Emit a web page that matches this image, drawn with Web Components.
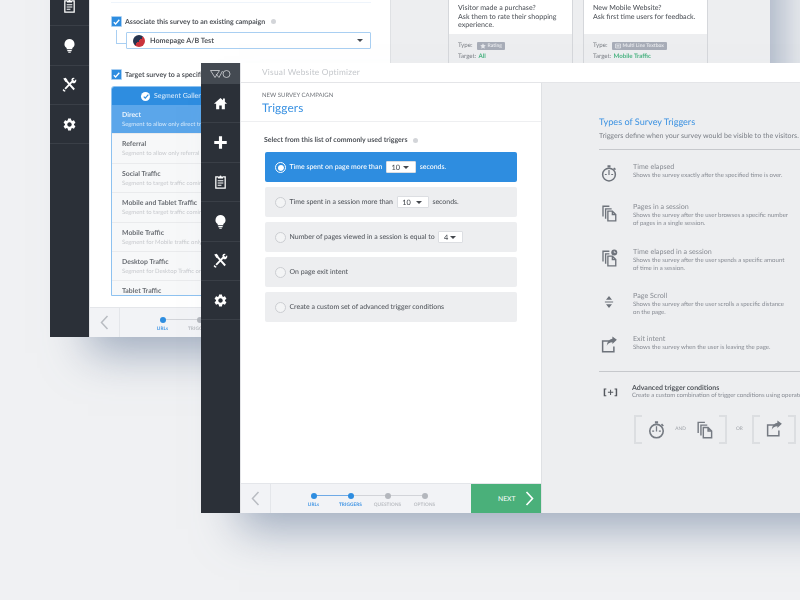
<!DOCTYPE html>
<html>
<head>
<meta charset="utf-8">
<title>Survey triggers</title>
<style>
    html, body{ margin: 0; height: 100%; overflow: hidden; }
    body{ background-color: #f0f1f3; font-family: 'Lato', 'Liberation Sans', sans-serif; color: #5e6268; text-rendering: geometricPrecision; }
    #back{ --win-x: 50px; --win-y: -113px; z-index: 1; }
    #front{ --win-x: 201px; --win-y: 63px; z-index: 2; }
</style>
</head>
<body>

<survey-window id="back" brand="Visual Website Optimizer">
    <campaign-form slot="main"></campaign-form>
    <step-footer slot="footer" active="1"></step-footer>
    <template-cards slot="aside"></template-cards>
</survey-window>

<survey-window id="front" brand="Visual Website Optimizer">
    <triggers-form slot="main"></triggers-form>
    <step-footer slot="footer" active="2" next></step-footer>
    <trigger-help slot="aside"></trigger-help>
</survey-window>

<script>
const ICONS = {
    home: '<path fill="currentColor" d="M12 3 1.5 12.5H5V21h5v-6h4v6h5v-8.500h3.500L19 9.300V4h-3v2.600z"/>',
    plus: '<path fill="currentColor" d="M9.500 2h5v7.500H22v5h-7.500V22h-5v-7.500H2v-5h7.500z"/>',
    clipboard: '<path fill="none" stroke="currentColor" stroke-width="2" d="M8 4.500H4.500V22.500H19.500V4.500H16"/><path fill="currentColor" d="M8 4h2.500a1.500 1.500 0 0 1 3 0H16v3H8zM7.500 10h9v1.700h-9zM7.500 13.500h9v1.700h-9zM7.500 17h6v1.700h-6z"/>',
    bulb: '<path fill="currentColor" d="M12 1.500a8 8 0 0 0-4.500 14.600V18h9v-1.900A8 8 0 0 0 12 1.500zM8.500 19.200h7V21h-7zM10 22h4v1.500h-4z"/>',
    tools: '<path fill="none" stroke="currentColor" stroke-width="3" d="M6 5 19.500 20M18 5.500 5 19"/><path fill="currentColor" d="M2 2.500 6 1 9 5 5.500 8zM15 3.500a4.500 4.500 0 0 1 5.500-2L17.500 4.500 19.500 6.500 22.500 3.500a4.500 4.500 0 0 1-6 6zM2 19l4 3.500L3.500 23.500 1 21z"/>',
    gear: '<path fill="currentColor" d="M19.140 12.940c.04-.3.06-.61.06-.94 0-.32-.02-.64-.07-.94l2.030-1.580c.18-.14.23-.41.12-.61l-1.920-3.320c-.12-.22-.37-.29-.59-.22l-2.390.96c-.5-.38-1.030-.7-1.620-.94l-.36-2.540c-.04-.24-.24-.41-.48-.41h-3.840c-.24 0-.43.17-.47.41l-.36 2.540c-.59.24-1.130.57-1.620.94l-2.390-.96c-.22-.08-.47 0-.59.22L2.740 8.870c-.12.21-.08.47.12.61l2.030 1.580c-.05.3-.09.63-.09.94s.02.64.07.94l-2.030 1.580c-.18.14-.23.41-.12.61l1.920 3.320c.12.22.37.29.59.22l2.390-.96c.5.38 1.030.7 1.620.94l.36 2.540c.05.24.24.41.48.41h3.840c.24 0 .44-.17.47-.41l.36-2.540c.59-.24 1.130-.56 1.620-.94l2.390.96c.22.08.47 0 .59-.22l1.920-3.320c.12-.22.07-.47-.12-.61l-2.010-1.580zM12 15.600c-1.980 0-3.600-1.620-3.600-3.600s1.620-3.600 3.600-3.600 3.600 1.620 3.600 3.600-1.620 3.600-3.600 3.600z"/>',
    watch: '<circle cx="12" cy="14" r="8.500" fill="none" stroke="currentColor" stroke-width="2"/><path fill="currentColor" d="M10 1.500h4v3h-4zM19 4.500l2.300 2.300-1.400 1.400-2.300-2.300zM11.200 8h1.600v6.500h-1.600zM6.500 13.300h2.500v1.400H6.500zM15 13.300h2.500v1.400H15z"/>',
    pages: '<path fill="none" stroke="currentColor" stroke-width="1.800" d="M10.500 9.500h6l4.500 4.500v8.500H10.500zM16.500 9.500V14H21"/><path fill="none" stroke="currentColor" stroke-width="1.800" d="M7.500 19.500V6.500h8M4 16.500V3h8.500"/>',
    pagesclock: '<path fill="none" stroke="currentColor" stroke-width="1.800" d="M10.500 9.500h6l4.500 4.500v8.500H10.500zM16.500 9.500V14H21"/><path fill="none" stroke="currentColor" stroke-width="1.800" d="M7.500 19.500V6.500h5M4 16.500V3h8.500"/><circle cx="19" cy="4.500" r="4" fill="currentColor"/><path fill="none" stroke="#edeef0" stroke-width="1" d="M19 2.500v2.300h2"/>',
    scroll: '<path fill="currentColor" d="M12 4 16 9H8zM12 20 8 15h8zM6.500 11.300h11v1.400h-11z"/>',
    exit: '<path fill="none" stroke="currentColor" stroke-width="2" d="M13 6.500H3.500V21h15v-7"/><path fill="currentColor" d="M22.500 5 16.500 .8v2.800C12 4.200 9.500 7.500 9 13c1.500-3.200 3.800-4.800 7.500-4.800v2.600z"/>'
};

function icon(name, size) {
    return `<svg xmlns="http://www.w3.org/2000/svg" viewBox="0 0 24 24" width="${size}" height="${size}" style="display:block">${ICONS[name]}</svg>`;
}

class NavRail extends HTMLElement {
    constructor() {
        super();
        this.shadow = this.attachShadow({ mode: 'open' });
    }

    connectedCallback() {
        let items = ['home', 'plus', 'clipboard', 'bulb', 'tools', 'gear'];
        this.shadow.innerHTML =
        `
        <style>
            :host{
                display: block;
                flex: 1;
                background-color: #2b3038;
                color: #fff;
            }
            div{
                align-items: center;
                border-bottom: 1px solid #3a3f47;
                box-sizing: border-box;
                display: flex;
                height: 39.400px;
                justify-content: center;
            }
        </style>
        ${items.map(name => `<div>${icon(name, 15)}</div>`).join('')}`;
    }
}
customElements.define('nav-rail', NavRail);

class SurveyWindow extends HTMLElement {
    constructor() {
        super();
        this.shadow = this.attachShadow({ mode: 'open' });
    }

    connectedCallback() {
        this.shadow.innerHTML =
        `
        <style>
            :host{
                background-color: #fff;
                box-shadow: 24px 30px 42px -14px rgba(105, 125, 155, 0.6);
                display: flex;
                filter: blur(0.3px);
                height: 450px;
                left: var(--win-x);
                position: absolute;
                top: var(--win-y);
                width: 720px;
            }
            .left{
                display: flex;
                flex-direction: column;
                flex: none;
                width: 39px;
            }
            .logo{
                align-items: center;
                background-color: #444a52;
                display: flex;
                flex: none;
                height: 21px;
                justify-content: center;
            }
            .right{
                border-left: 1px solid #e4e5e8;
                display: flex;
                flex: 1;
                flex-direction: column;
                min-width: 0;
            }
            .bar{
                border-bottom: 1px solid #e4e5e8;
                box-sizing: border-box;
                color: #c4c7cb;
                flex: none;
                font-size: 8.300px;
                height: 20px;
                letter-spacing: 0.25px;
                line-height: 19px;
                padding-left: 21px;
            }
            .body{
                display: flex;
                flex: 1;
                min-height: 0;
            }
            .pane{
                border-right: 1px solid #dfe1e4;
                box-sizing: border-box;
                display: flex;
                flex: none;
                flex-direction: column;
                width: 301px;
            }
            .content{
                flex: 1;
                min-height: 0;
                overflow: hidden;
            }
            .aside{
                background-color: #edeef0;
                flex: 1;
                min-width: 0;
                overflow: hidden;
            }
        </style>
        <div class="left">
            <div class="logo">
                <svg xmlns="http://www.w3.org/2000/svg" width="21" height="8" viewBox="0 0 21 8" fill="none" stroke="#d5d8dc" stroke-width="0.8">
                    <path d="M0.500 0.500H9.500L5 7.500ZM6 4 9 7.500 12.500 1"/><circle cx="16.500" cy="4" r="3.500"/>
                </svg>
            </div>
            <nav-rail></nav-rail>
        </div>
        <div class="right">
            <div class="bar">${this.getAttribute('brand')}</div>
            <div class="body">
                <div class="pane">
                    <div class="content"><slot name="main"></slot></div>
                    <slot name="footer"></slot>
                </div>
                <div class="aside"><slot name="aside"></slot></div>
            </div>
        </div>`;
    }
}
customElements.define('survey-window', SurveyWindow);

class StepFooter extends HTMLElement {
    constructor() {
        super();
        this.shadow = this.attachShadow({ mode: 'open' });
    }

    connectedCallback() {
        let active = Number(this.getAttribute('active'));
        let labels = ['URLs', 'TRIGGERS', 'QUESTIONS', 'OPTIONS'];
        let steps = labels.map((label, i) => {
            let on = i < active;
            let line = i < labels.length - 1 ? `<i class="${i < active - 1 ? 'on' : ''}"></i>` : '';
            return `<div class="step ${on ? 'on' : ''}"><b></b>${line}<span>${label}</span></div>`;
        }).join('');

        this.shadow.innerHTML =
        `
        <style>
            :host{
                background-color: #f2f3f6;
                border-top: 1px solid #e4e6ea;
                box-sizing: border-box;
                display: flex;
                flex: none;
                height: 30px;
            }
            .prev{
                align-items: center;
                border-right: 1px solid #e4e6ea;
                display: flex;
                flex: none;
                justify-content: center;
                width: 29px;
            }
            .steps{
                display: flex;
                flex: 1;
                padding-left: 24px;
            }
            .step{
                flex: none;
                height: 100%;
                position: relative;
                width: 37px;
            }
            .step b{
                background-color: #b4b7bd;
                border-radius: 50%;
                height: 6px;
                left: 15.500px;
                position: absolute;
                top: 8.500px;
                width: 6px;
                z-index: 1;
            }
            .step.on b{ background-color: #2e8de0; }
            .step i{
                background-color: #d2d4d9;
                height: 1px;
                left: 18px;
                position: absolute;
                top: 11px;
                width: 37px;
            }
            .step i.on{ background-color: #6faae6; }
            .step span{
                color: #b9bcc1;
                font-size: 4.700px;
                font-weight: 700;
                left: -12px;
                letter-spacing: 0.1px;
                line-height: 8px;
                position: absolute;
                right: -12px;
                text-align: center;
                top: 15.500px;
            }
            .step.on span{ color: #3f94e4; }
            .next{
                align-items: center;
                background-color: #4ab07a;
                color: #fff;
                display: flex;
                flex: none;
                font-size: 6.800px;
                gap: 9px;
                padding: 0 7px 0 27px;
                width: 36px;
            }
        </style>
        <div class="prev">
            <svg xmlns="http://www.w3.org/2000/svg" width="9" height="15" viewBox="0 0 9 15" fill="none" stroke="#b9bcc2" stroke-width="1.500"><path d="M7.500 1 1.500 7.500 7.500 14"/></svg>
        </div>
        <div class="steps">${steps}</div>
        ${this.hasAttribute('next') ? `<div class="next"><span>NEXT</span><svg xmlns="http://www.w3.org/2000/svg" width="9" height="15" viewBox="0 0 9 15" fill="none" stroke="#fff" stroke-width="1.600" style="flex:none"><path d="M1.500 1 7.500 7.500 1.500 14"/></svg></div>` : ''}`;
    }
}
customElements.define('step-footer', StepFooter);

class TriggerOption extends HTMLElement {
    constructor() {
        super();
        this.shadow = this.attachShadow({ mode: 'open' });
    }

    connectedCallback() {
        this.shadow.innerHTML =
        `
        <style>
            :host{
                align-items: center;
                background-color: #edeef0;
                border-radius: 2px;
                color: #55595f;
                display: flex;
                font-size: 6.950px;
                font-weight: 500;
                height: 30px;
                padding-left: 9.500px;
                white-space: pre;
            }
            :host([selected]){
                background-color: #2e8de0;
                color: #fff;
            }
            .radio{
                background-color: #f3f4f5;
                border: 1px solid #ccced2;
                border-radius: 50%;
                box-sizing: border-box;
                flex: none;
                height: 11px;
                margin-right: 4px;
                width: 11px;
            }
            :host([selected]) .radio{
                background-color: #fff;
                border: 1px solid #fff;
                box-shadow: inset 0 0 0 1px #2e8de0;
                padding: 1.500px;
                background-clip: content-box;
            }
        </style>
        <div class="radio"></div>
        <slot></slot>`;
    }
}
customElements.define('trigger-option', TriggerOption);

class MiniSelect extends HTMLElement {
    constructor() {
        super();
        this.shadow = this.attachShadow({ mode: 'open' });
    }

    connectedCallback() {
        this.shadow.innerHTML =
        `
        <style>
            :host{
                align-items: center;
                background-color: #fff;
                border: 1px solid #dcdee2;
                border-radius: 1px;
                box-sizing: border-box;
                color: #4c5056;
                display: inline-flex;
                font-size: 7.400px;
                height: 12px;
                justify-content: space-between;
                margin: 0 2px 0 2px;
                padding: 0 6px 0 4.500px;
                vertical-align: middle;
            }
            i{
                border-left: 3px solid transparent;
                border-right: 3px solid transparent;
                border-top: 3px solid #44484e;
            }
        </style>
        <slot></slot><i></i>`;
    }
}
customElements.define('mini-select', MiniSelect);

class TriggersForm extends HTMLElement {
    constructor() {
        super();
        this.shadow = this.attachShadow({ mode: 'open' });
    }

    connectedCallback() {
        this.shadow.innerHTML =
        `
        <style>
            :host{ display: block; }
            header{
                border-bottom: 1px solid #eeeff1;
                box-sizing: border-box;
                height: 39px;
                padding: 9px 0 0 21px;
            }
            small{
                color: #73777d;
                display: block;
                font-size: 6px;
                line-height: 8px;
            }
            h1{
                color: #3b92e2;
                font-size: 11.800px;
                font-weight: 400;
                letter-spacing: 0.1px;
                line-height: 15px;
                margin: 0;
            }
            p{
                align-items: center;
                color: #4f5359;
                display: flex;
                font-size: 7px;
                font-weight: 700;
                gap: 5px;
                height: 10px;
                margin: 13px 0 7px 23px;
            }
            p i{
                background-color: #d3d5d9;
                border-radius: 50%;
                height: 5px;
                width: 5px;
            }
            .list{
                display: flex;
                flex-direction: column;
                gap: 5px;
                padding: 0 24px;
            }
        </style>
        <header><small>NEW SURVEY CAMPAIGN</small><h1>Triggers</h1></header>
        <p>Select from this list of commonly used triggers <i></i></p>
        <div class="list">
            <trigger-option selected>Time spent on page more than <mini-select style="width:30px">10</mini-select> seconds.</trigger-option>
            <trigger-option>Time spent in a session more than <mini-select style="width:32px">10</mini-select> seconds.</trigger-option>
            <trigger-option>Number of pages viewed in a session is equal to <mini-select style="width:25px">4</mini-select></trigger-option>
            <trigger-option>On page exit intent</trigger-option>
            <trigger-option>Create a custom set of advanced trigger conditions</trigger-option>
        </div>`;
    }
}
customElements.define('triggers-form', TriggersForm);

class HelpItem extends HTMLElement {
    constructor() {
        super();
        this.shadow = this.attachShadow({ mode: 'open' });
    }

    connectedCallback() {
        let gap = this.getAttribute('gap') || 0;
        this.shadow.innerHTML =
        `
        <style>
            :host{
                display: flex;
                margin-top: ${gap}px;
                width: 191px;
            }
            .ico{
                color: #6e737b;
                display: flex;
                flex: none;
                justify-content: center;
                padding-top: 1px;
                width: 20px;
            }
            .txt{ margin-left: 14px; }
            b{
                color: #888c93;
                display: block;
                font-size: 7.150px;
                font-weight: 400;
                line-height: 8px;
                margin-bottom: 1px;
            }
            div.d{
                color: #878b93;
                font-size: 6.050px;
                line-height: 7.600px;
            }
        </style>
        <div class="ico">${icon(this.getAttribute('icon'), 18)}</div>
        <div class="txt"><b>${this.getAttribute('name')}</b><div class="d"><slot></slot></div></div>`;
    }
}
customElements.define('help-item', HelpItem);

class TriggerHelp extends HTMLElement {
    constructor() {
        super();
        this.shadow = this.attachShadow({ mode: 'open' });
    }

    connectedCallback() {
        this.shadow.innerHTML =
        `
        <style>
            :host{
                display: block;
                padding: 33px 0 0 57px;
                width: 330px;
            }
            h2{
                color: #3b92e2;
                font-size: 9.100px;
                font-weight: 400;
                line-height: 12px;
                margin: 0 0 3px;
            }
            p{
                color: #7d8188;
                font-size: 7.100px;
                line-height: 10px;
                margin: 0 0 8px;
            }
            hr{
                background-color: #c6c8cc;
                border: 0;
                height: 1px;
                margin: 0 0 13px;
            }
            .adv{
                display: flex;
                margin-top: 12px;
            }
            .adv em{
                color: #54585e;
                flex: none;
                font-family: 'DejaVu Sans', sans-serif;
                font-size: 8.500px;
                font-style: normal;
                font-weight: 700;
                line-height: 14px;
                padding: 2px 0 0 4px;
                width: 29px;
            }
            .adv b{
                color: #54585e;
                display: block;
                font-size: 7px;
                font-weight: 700;
                line-height: 8px;
            }
            .adv span{
                color: #878b93;
                display: block;
                font-size: 6.050px;
                line-height: 8px;
                white-space: nowrap;
            }
            .combo{
                align-items: center;
                color: #757a82;
                display: flex;
                margin: 15px 0 0 35px;
            }
            .group{
                align-items: center;
                border-left: 2.500px solid #dcdee1;
                border-right: 2.500px solid #dcdee1;
                box-sizing: border-box;
                display: flex;
                height: 29px;
                justify-content: center;
                position: relative;
            }
            .group::before, .group::after{
                border-bottom: 2px solid #dcdee1;
                border-top: 2px solid #dcdee1;
                bottom: 0;
                box-sizing: border-box;
                content: '';
                position: absolute;
                top: 0;
                width: 6px;
            }
            .group::before{ left: 0; }
            .group::after{ right: 0; }
            .combo small{
                color: #9da1a7;
                font-size: 4.800px;
                margin: 0 9px;
            }
        </style>
        <h2>Types of Survey Triggers</h2>
        <p>Triggers define when your survey would be visible to the visitors.</p>
        <hr>
        <help-item icon="watch" name="Time elapsed">Shows the survey exactly after the specified time is over.</help-item>
        <help-item icon="pages" name="Pages in a session" gap="21">Shows the survey after the user browses a specific number of pages in a single session.</help-item>
        <help-item icon="pagesclock" name="Time elapsed in a session" gap="21">Shows the survey after the user spends a specific amount of time in a session.</help-item>
        <help-item icon="scroll" name="Page Scroll" gap="20">Shows the survey after the user scrolls a specific distance on the page.</help-item>
        <help-item icon="exit" name="Exit intent" gap="18">Shows the survey when the user is leaving the page.</help-item>
        <hr style="margin:17px 0 0">
        <div class="adv">
            <em>[+]</em>
            <div><b>Advanced trigger conditions</b><span>Create a custom combination of trigger conditions using operators.</span></div>
        </div>
        <div class="combo">
            <div class="group" style="width:93px">${icon('watch', 19)}<small>AND</small>${icon('pages', 19)}</div>
            <small>OR</small>
            <div class="group" style="width:44px">${icon('exit', 18)}</div>
        </div>`;
    }
}
customElements.define('trigger-help', TriggerHelp);

class CampaignForm extends HTMLElement {
    constructor() {
        super();
        this.shadow = this.attachShadow({ mode: 'open' });
    }

    connectedCallback() {
        let rows = [
            ['Direct', 'Segment to allow only direct traffic to the survey'],
            ['Referral', 'Segment to allow only referral traffic to the survey'],
            ['Social Traffic', 'Segment to target traffic coming from social sites'],
            ['Mobile and Tablet Traffic', 'Segment to target traffic coming from mobile devices'],
            ['Mobile Traffic', 'Segment for Mobile traffic only'],
            ['Desktop Traffic', 'Segment for Desktop Traffic only'],
            ['Tablet Traffic', 'Segment for Tablet Traffic only']
        ];
        let check = '<span class="check"><svg xmlns="http://www.w3.org/2000/svg" width="7" height="6" viewBox="0 0 7 6" fill="none" stroke="#fff" stroke-width="1.300"><path d="M.8 3.200 2.600 5 6.300 .8"/></svg></span>';

        this.shadow.innerHTML =
        `
        <style>
            :host{
                display: block;
                padding: 95px 19px 0 21px;
            }
            .strip{
                background-color: #eef4fb;
                height: 1px;
                margin-bottom: 13px;
            }
            .line{
                align-items: center;
                color: #4f5359;
                display: flex;
                font-size: 7px;
                font-weight: 700;
                gap: 3px;
                height: 11px;
                white-space: nowrap;
            }
            .check{
                align-items: center;
                background-color: #2e8de0;
                border: 1px solid #a9cff2;
                border-radius: 1px;
                box-sizing: border-box;
                display: flex;
                flex: none;
                height: 11px;
                justify-content: center;
                width: 11px;
            }
            .hint{
                background-color: #d3d5d9;
                border-radius: 50%;
                height: 5px;
                margin-left: 3px;
                width: 5px;
            }
            .wrap{ position: relative; }
            .elbow{
                border-bottom: 1px solid #a9cff2;
                border-left: 1px solid #a9cff2;
                height: 13px;
                left: 5px;
                position: absolute;
                top: -2px;
                width: 10px;
            }
            .select{
                align-items: center;
                border: 1px solid #a9cff2;
                border-radius: 1px;
                box-sizing: border-box;
                color: #4f5359;
                display: flex;
                font-size: 7.200px;
                font-weight: 700;
                height: 17px;
                margin: 5px 0 0 15px;
                padding: 0 7px 0 6px;
            }
            .flag{
                background: linear-gradient(135deg, #26344f 50%, #c9333c 50%);
                border-radius: 50%;
                height: 12px;
                margin-right: 5px;
                width: 12px;
            }
            .select i{
                border-left: 3px solid transparent;
                border-right: 3px solid transparent;
                border-top: 3px solid #44484e;
                margin-left: auto;
            }
            .gap{ height: 20px; }
            .panel{
                border: 1px solid #8ec2f0;
                border-radius: 3px 3px 0 0;
                height: 208px;
                margin-top: 6px;
                overflow: hidden;
            }
            .head{
                align-items: center;
                background-color: #2e8de0;
                color: #dcecfb;
                display: flex;
                font-size: 7px;
                gap: 4px;
                height: 18px;
                padding-left: 29px;
            }
            .tick{
                align-items: center;
                background-color: #fff;
                border-radius: 50%;
                display: flex;
                height: 9px;
                justify-content: center;
                width: 9px;
            }
            .row{
                background-color: #f7f8f9;
                border-bottom: 1px solid #eaebed;
                box-sizing: border-box;
                height: 29.400px;
                padding: 6px 0 0 10px;
                white-space: nowrap;
            }
            .row b{
                color: #6a6e74;
                display: block;
                font-size: 6.900px;
                line-height: 9px;
            }
            .row span{
                color: #c8cace;
                display: block;
                font-size: 5.900px;
                line-height: 10px;
            }
            .row.on{ background-color: #5ba6ea; }
            .row.on b{ color: #eaf4fd; }
            .row.on span{ color: #d4e8fa; }
        </style>
        <div class="strip"></div>
        <div class="line">${check}Associate this survey to an existing campaign <span class="hint"></span></div>
        <div class="wrap">
            <div class="elbow"></div>
            <div class="select"><span class="flag"></span>Homepage A/B Test<i></i></div>
        </div>
        <div class="gap"></div>
        <div class="line">${check}Target survey to a specific segment</div>
        <div class="panel">
            <div class="head"><span class="tick"><svg xmlns="http://www.w3.org/2000/svg" width="6" height="5" viewBox="0 0 7 6" fill="none" stroke="#2e8de0" stroke-width="1.400"><path d="M.8 3.200 2.600 5 6.300 .8"/></svg></span>Segment Gallery</div>
            ${rows.map((r, i) => `<div class="row ${i == 0 ? 'on' : ''}"><b>${r[0]}</b><span>${r[1]}</span></div>`).join('')}
        </div>`;
    }
}
customElements.define('campaign-form', CampaignForm);

class TemplateCards extends HTMLElement {
    constructor() {
        super();
        this.shadow = this.attachShadow({ mode: 'open' });
    }

    connectedCallback() {
        let star = '<svg xmlns="http://www.w3.org/2000/svg" width="6" height="6" viewBox="0 0 24 24" fill="#e6e8ec"><path d="M12 1l3.400 7.400 7.600.9-5.600 5.300 1.500 8L12 18.600 5.100 22.600l1.500-8L1 9.300l7.600-.9z"/></svg>';
        let box = '<svg xmlns="http://www.w3.org/2000/svg" width="6" height="6" viewBox="0 0 24 24" fill="none" stroke="#e6e8ec" stroke-width="3"><path d="M2 4h20v16H2zM6 10h12M6 15h12"/></svg>';
        this.shadow.innerHTML =
        `
        <style>
            :host{
                display: flex;
                gap: 10px;
                padding: 61px 0 0 57px;
            }
            .card{
                border: 1px solid #d5d7db;
                border-top: 0;
                box-sizing: border-box;
                flex: none;
                height: 150px;
                width: 125px;
            }
            .txt{
                background-color: #fff;
                box-sizing: border-box;
                color: #55595f;
                font-size: 7.100px;
                font-weight: 500;
                height: 66px;
                line-height: 8.700px;
                padding: 36px 0 0 9px;
            }
            .meta{
                color: #7d8187;
                font-size: 6.200px;
                padding: 6px 0 0 9px;
            }
            .meta div{
                align-items: center;
                display: flex;
                height: 11px;
            }
            .type{ gap: 4px; }
            .tag{
                align-items: center;
                background-color: #a8adb8;
                border-radius: 1px;
                color: #e6e8ec;
                display: inline-flex;
                font-size: 5px;
                font-weight: 700;
                gap: 2px;
                height: 8px;
                padding: 0 3px 0 3px;
            }
            .green{
                color: #4cb483;
                font-weight: 700;
                margin-left: 2px;
            }
        </style>
        <div class="card">
            <div class="txt">Visitor made a purchase?<br>Ask them to rate their shopping<br>experience.</div>
            <div class="meta">
                <div class="type">Type: <span class="tag">${star}Rating</span></div>
                <div>Target: <span class="green">All</span></div>
            </div>
        </div>
        <div class="card">
            <div class="txt">New Mobile Website?<br>Ask first time users for feedback.</div>
            <div class="meta">
                <div class="type">Type: <span class="tag">${box}Multi Line Textbox</span></div>
                <div>Target: <span class="green">Mobile Traffic</span></div>
            </div>
        </div>`;
    }
}
customElements.define('template-cards', TemplateCards);
</script>
</body>
</html>
